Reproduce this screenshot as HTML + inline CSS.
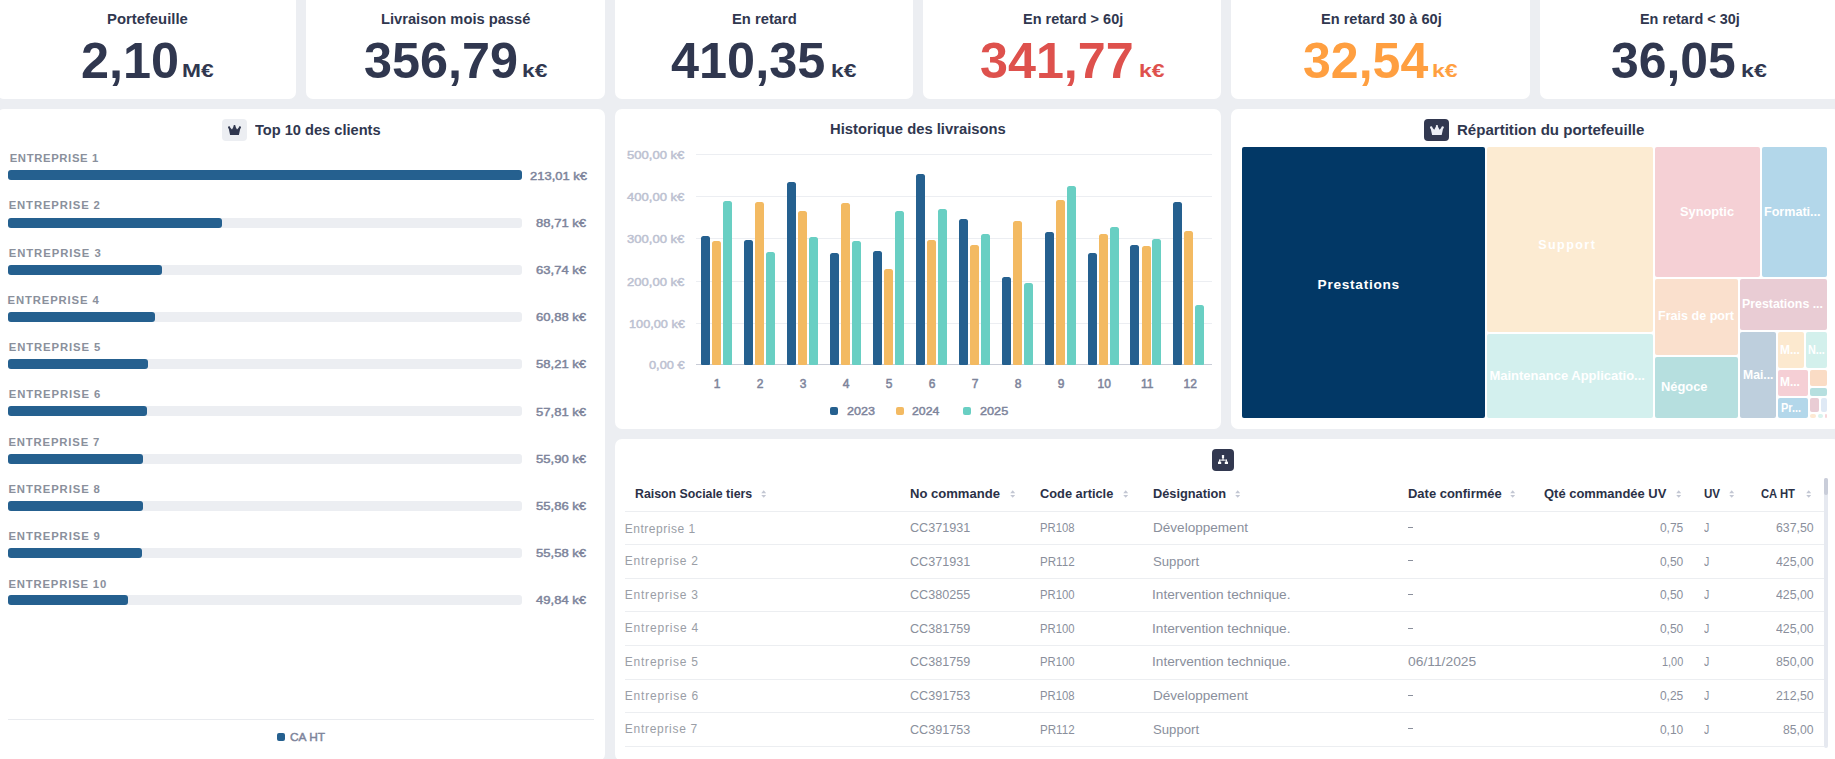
<!DOCTYPE html>
<html lang="fr"><head><meta charset="utf-8"><title>Dashboard</title>
<style>
html,body{margin:0;padding:0;}
html{overflow:hidden;width:1835px;height:759px;}
body{width:1835px;height:759px;overflow:hidden;background:#eceef2;position:relative;font-family:"Liberation Sans", sans-serif;}
#r{position:absolute;left:0;top:0;width:1835px;height:759px;overflow:hidden;}
#r>div,#r>svg{position:absolute;box-sizing:border-box;}
.t{position:absolute;white-space:nowrap;line-height:1;transform-origin:0 50%;display:block;}
</style></head><body><div id="r">
<div style="left:-3px;top:-6px;width:299px;height:105px;background:#ffffff;border-radius:7px;"></div>
<div style="left:306px;top:-6px;width:299px;height:105px;background:#ffffff;border-radius:7px;"></div>
<div style="left:615px;top:-6px;width:298px;height:105px;background:#ffffff;border-radius:7px;"></div>
<div style="left:923px;top:-6px;width:298px;height:105px;background:#ffffff;border-radius:7px;"></div>
<div style="left:1231px;top:-6px;width:299px;height:105px;background:#ffffff;border-radius:7px;"></div>
<div style="left:1540px;top:-6px;width:300px;height:105px;background:#ffffff;border-radius:7px;"></div>
<div style="left:-3px;top:109px;width:608px;height:652px;background:#ffffff;border-radius:7px;"></div>
<div style="left:615px;top:109px;width:606px;height:320px;background:#ffffff;border-radius:7px;"></div>
<div style="left:1231px;top:109px;width:609px;height:320px;background:#ffffff;border-radius:7px;"></div>
<div style="left:615px;top:439px;width:1225px;height:322px;background:#ffffff;border-radius:7px;"></div>
<span class="t" style="left:106.80px;top:11.85px;font-size:14px;color:#30374f;font-weight:700;transform:scaleX(1.0594);">Portefeuille</span>
<span class="t" style="left:80.68px;top:35.77px;font-size:49.3px;color:#30374f;font-weight:700;transform:scaleX(1.0221);">2,10</span>
<span class="t" style="left:181.90px;top:62.69px;font-size:17.5px;color:#30374f;font-weight:700;transform:scaleX(1.3021);">M€</span>
<span class="t" style="left:380.60px;top:11.85px;font-size:14px;color:#30374f;font-weight:700;transform:scaleX(1.0490);">Livraison mois passé</span>
<span class="t" style="left:363.78px;top:35.77px;font-size:49.3px;color:#30374f;font-weight:700;transform:scaleX(1.0211);">356,79</span>
<span class="t" style="left:522.30px;top:62.69px;font-size:17.5px;color:#30374f;font-weight:700;transform:scaleX(1.3025);">k€</span>
<span class="t" style="left:731.80px;top:11.85px;font-size:14px;color:#30374f;font-weight:700;transform:scaleX(1.0540);">En retard</span>
<span class="t" style="left:670.90px;top:35.77px;font-size:49.3px;color:#30374f;font-weight:700;transform:scaleX(1.0229);">410,35</span>
<span class="t" style="left:830.60px;top:62.69px;font-size:17.5px;color:#30374f;font-weight:700;transform:scaleX(1.3025);">k€</span>
<span class="t" style="left:1022.70px;top:11.85px;font-size:14px;color:#30374f;font-weight:700;transform:scaleX(1.0345);">En retard &gt; 60j</span>
<span class="t" style="left:980.08px;top:35.77px;font-size:49.3px;color:#de514d;font-weight:700;transform:scaleX(1.0191);">341,77</span>
<span class="t" style="left:1138.69px;top:62.69px;font-size:17.5px;color:#de514d;font-weight:700;transform:scaleX(1.3132);">k€</span>
<span class="t" style="left:1320.50px;top:11.85px;font-size:14px;color:#30374f;font-weight:700;transform:scaleX(1.0412);">En retard 30 à 60j</span>
<span class="t" style="left:1302.68px;top:35.77px;font-size:49.3px;color:#ff9f40;font-weight:700;transform:scaleX(1.0151);">32,54</span>
<span class="t" style="left:1432.48px;top:62.69px;font-size:17.5px;color:#ff9f40;font-weight:700;transform:scaleX(1.3186);">k€</span>
<span class="t" style="left:1639.70px;top:11.85px;font-size:14px;color:#30374f;font-weight:700;transform:scaleX(1.0293);">En retard &lt; 30j</span>
<span class="t" style="left:1610.99px;top:35.77px;font-size:49.3px;color:#30374f;font-weight:700;transform:scaleX(1.0103);">36,05</span>
<span class="t" style="left:1741.08px;top:62.69px;font-size:17.5px;color:#30374f;font-weight:700;transform:scaleX(1.3239);">k€</span>
<div style="left:222px;top:119px;width:25px;height:22px;background:#eceef2;border-radius:4px;"></div>
<svg style="left:228px;top:124.8px" width="13" height="10.2" viewBox="0 0 26 20"><path fill="#30374f" d="M1 5 L3.2 3.6 L8 9 L12 1.5 L13 0.5 L14 1.5 L18 9 L22.8 3.6 L25 5 L21.8 20 L4.2 20 Z"/><circle cx="13" cy="2" r="2" fill="#30374f"/><circle cx="2.2" cy="4.6" r="2.2" fill="#30374f"/><circle cx="23.8" cy="4.6" r="2.2" fill="#30374f"/></svg>
<span class="t" style="left:254.50px;top:123.00px;font-size:14px;color:#30374f;font-weight:700;transform:scaleX(1.0436);">Top 10 des clients</span>
<div style="left:8px;top:170px;width:514px;height:10px;background:#eceef2;border-radius:3px;"></div>
<div style="left:8px;top:170px;width:514px;height:10px;background:#25608f;border-radius:3px;"></div>
<span class="t" style="left:529.50px;top:170.18px;font-size:11.6px;color:#7d849b;transform:scaleX(1.1189);-webkit-text-stroke:0.45px #7d849b;">213,01 k€</span>
<span class="t" style="left:9.70px;top:152.83px;font-size:11.3px;color:#8a909c;font-weight:700;letter-spacing:0.634px;">ENTREPRISE 1</span>
<div style="left:8px;top:218px;width:514px;height:10px;background:#eceef2;border-radius:3px;"></div>
<div style="left:8px;top:218px;width:214.06px;height:10px;background:#25608f;border-radius:3px;"></div>
<span class="t" style="left:536.40px;top:217.18px;font-size:11.6px;color:#7d849b;transform:scaleX(1.1259);-webkit-text-stroke:0.45px #7d849b;">88,71 k€</span>
<span class="t" style="left:8.70px;top:199.83px;font-size:11.3px;color:#8a909c;font-weight:700;letter-spacing:0.87px;">ENTREPRISE 2</span>
<div style="left:8px;top:265px;width:514px;height:10px;background:#eceef2;border-radius:3px;"></div>
<div style="left:8px;top:265px;width:153.807px;height:10px;background:#25608f;border-radius:3px;"></div>
<span class="t" style="left:536.40px;top:264.18px;font-size:11.6px;color:#7d849b;transform:scaleX(1.1259);-webkit-text-stroke:0.45px #7d849b;">63,74 k€</span>
<span class="t" style="left:8.70px;top:247.83px;font-size:11.3px;color:#8a909c;font-weight:700;letter-spacing:0.943px;">ENTREPRISE 3</span>
<div style="left:8px;top:312px;width:514px;height:10px;background:#eceef2;border-radius:3px;"></div>
<div style="left:8px;top:312px;width:146.905px;height:10px;background:#25608f;border-radius:3px;"></div>
<span class="t" style="left:536.40px;top:310.88px;font-size:11.6px;color:#7d849b;transform:scaleX(1.1259);-webkit-text-stroke:0.45px #7d849b;">60,88 k€</span>
<span class="t" style="left:7.50px;top:295.03px;font-size:11.3px;color:#8a909c;font-weight:700;letter-spacing:0.87px;">ENTREPRISE 4</span>
<div style="left:8px;top:359px;width:514px;height:10px;background:#eceef2;border-radius:3px;"></div>
<div style="left:8px;top:359px;width:140.463px;height:10px;background:#25608f;border-radius:3px;"></div>
<span class="t" style="left:536.40px;top:357.88px;font-size:11.6px;color:#7d849b;transform:scaleX(1.1259);-webkit-text-stroke:0.45px #7d849b;">58,21 k€</span>
<span class="t" style="left:8.70px;top:342.13px;font-size:11.3px;color:#8a909c;font-weight:700;letter-spacing:0.907px;">ENTREPRISE 5</span>
<div style="left:8px;top:406px;width:514px;height:10px;background:#eceef2;border-radius:3px;"></div>
<div style="left:8px;top:406px;width:139.497px;height:10px;background:#25608f;border-radius:3px;"></div>
<span class="t" style="left:536.40px;top:406.18px;font-size:11.6px;color:#7d849b;transform:scaleX(1.1259);-webkit-text-stroke:0.45px #7d849b;">57,81 k€</span>
<span class="t" style="left:8.70px;top:388.63px;font-size:11.3px;color:#8a909c;font-weight:700;letter-spacing:0.907px;">ENTREPRISE 6</span>
<div style="left:8px;top:454px;width:514px;height:10px;background:#eceef2;border-radius:3px;"></div>
<div style="left:8px;top:454px;width:134.889px;height:10px;background:#25608f;border-radius:3px;"></div>
<span class="t" style="left:536.40px;top:452.68px;font-size:11.6px;color:#7d849b;transform:scaleX(1.1259);-webkit-text-stroke:0.45px #7d849b;">55,90 k€</span>
<span class="t" style="left:8.40px;top:436.63px;font-size:11.3px;color:#8a909c;font-weight:700;letter-spacing:0.843px;">ENTREPRISE 7</span>
<div style="left:8px;top:501px;width:514px;height:10px;background:#eceef2;border-radius:3px;"></div>
<div style="left:8px;top:501px;width:134.792px;height:10px;background:#25608f;border-radius:3px;"></div>
<span class="t" style="left:536.40px;top:499.68px;font-size:11.6px;color:#7d849b;transform:scaleX(1.1259);-webkit-text-stroke:0.45px #7d849b;">55,86 k€</span>
<span class="t" style="left:8.40px;top:483.73px;font-size:11.3px;color:#8a909c;font-weight:700;letter-spacing:0.898px;">ENTREPRISE 8</span>
<div style="left:8px;top:548px;width:514px;height:10px;background:#eceef2;border-radius:3px;"></div>
<div style="left:8px;top:548px;width:134.116px;height:10px;background:#25608f;border-radius:3px;"></div>
<span class="t" style="left:536.40px;top:547.18px;font-size:11.6px;color:#7d849b;transform:scaleX(1.1259);-webkit-text-stroke:0.45px #7d849b;">55,58 k€</span>
<span class="t" style="left:8.40px;top:531.33px;font-size:11.3px;color:#8a909c;font-weight:700;letter-spacing:0.898px;">ENTREPRISE 9</span>
<div style="left:8px;top:595px;width:514px;height:10px;background:#eceef2;border-radius:3px;"></div>
<div style="left:8px;top:595px;width:120.266px;height:10px;background:#25608f;border-radius:3px;"></div>
<span class="t" style="left:536.40px;top:593.68px;font-size:11.6px;color:#7d849b;transform:scaleX(1.1259);-webkit-text-stroke:0.45px #7d849b;">49,84 k€</span>
<span class="t" style="left:8.40px;top:578.83px;font-size:11.3px;color:#8a909c;font-weight:700;letter-spacing:0.832px;">ENTREPRISE 10</span>
<div style="left:8px;top:719px;width:586px;height:1px;background:#e9ebef;"></div>
<div style="left:277px;top:733px;width:8px;height:8px;background:#25608f;border-radius:2px;"></div>
<span class="t" style="left:290.40px;top:730.98px;font-size:11.6px;color:#7d849b;transform:scaleX(1.0260);-webkit-text-stroke:0.45px #7d849b;">CA HT</span>
<span class="t" style="left:830.00px;top:121.95px;font-size:14px;color:#30374f;font-weight:700;transform:scaleX(1.0557);">Historique des livraisons</span>
<div style="left:696px;top:154px;width:516px;height:1px;background:#eceef2;"></div>
<span class="t" style="left:627.20px;top:148.98px;font-size:11.6px;color:#bcc1d1;transform:scaleX(1.1267);-webkit-text-stroke:0.45px #bcc1d1;">500,00 k€</span>
<div style="left:696px;top:196px;width:516px;height:1px;background:#eceef2;"></div>
<span class="t" style="left:627.20px;top:190.98px;font-size:11.6px;color:#bcc1d1;transform:scaleX(1.1267);-webkit-text-stroke:0.45px #bcc1d1;">400,00 k€</span>
<div style="left:696px;top:238px;width:516px;height:1px;background:#eceef2;"></div>
<span class="t" style="left:627.20px;top:232.98px;font-size:11.6px;color:#bcc1d1;transform:scaleX(1.1267);-webkit-text-stroke:0.45px #bcc1d1;">300,00 k€</span>
<div style="left:696px;top:281px;width:516px;height:1px;background:#eceef2;"></div>
<span class="t" style="left:627.20px;top:275.98px;font-size:11.6px;color:#bcc1d1;transform:scaleX(1.1267);-webkit-text-stroke:0.45px #bcc1d1;">200,00 k€</span>
<div style="left:696px;top:323px;width:516px;height:1px;background:#eceef2;"></div>
<span class="t" style="left:628.70px;top:317.98px;font-size:11.6px;color:#bcc1d1;transform:scaleX(1.0975);-webkit-text-stroke:0.45px #bcc1d1;">100,00 k€</span>
<div style="left:696px;top:364px;width:516px;height:1px;background:#c8ccd6;"></div>
<span class="t" style="left:649.00px;top:359.48px;font-size:11.6px;color:#bcc1d1;transform:scaleX(1.1041);-webkit-text-stroke:0.45px #bcc1d1;">0,00 €</span>
<div style="left:701px;top:236px;width:9px;height:129px;background:#25608f;border-radius:2.5px 2.5px 1px 1px;"></div>
<div style="left:712px;top:241px;width:9px;height:124px;background:#f3ba62;border-radius:2.5px 2.5px 1px 1px;"></div>
<div style="left:723px;top:201px;width:9px;height:164px;background:#69cfc3;border-radius:2.5px 2.5px 1px 1px;"></div>
<span class="t" style="left:713.80px;top:377.84px;font-size:12px;color:#7d849b;-webkit-text-stroke:0.5px #7d849b;">1</span>
<div style="left:744px;top:240px;width:9px;height:125px;background:#25608f;border-radius:2.5px 2.5px 1px 1px;"></div>
<div style="left:755px;top:202px;width:9px;height:163px;background:#f3ba62;border-radius:2.5px 2.5px 1px 1px;"></div>
<div style="left:766px;top:252px;width:9px;height:113px;background:#69cfc3;border-radius:2.5px 2.5px 1px 1px;"></div>
<span class="t" style="left:756.80px;top:377.84px;font-size:12px;color:#7d849b;-webkit-text-stroke:0.5px #7d849b;">2</span>
<div style="left:787px;top:182px;width:9px;height:183px;background:#25608f;border-radius:2.5px 2.5px 1px 1px;"></div>
<div style="left:798px;top:211px;width:9px;height:154px;background:#f3ba62;border-radius:2.5px 2.5px 1px 1px;"></div>
<div style="left:809px;top:237px;width:9px;height:128px;background:#69cfc3;border-radius:2.5px 2.5px 1px 1px;"></div>
<span class="t" style="left:799.80px;top:377.84px;font-size:12px;color:#7d849b;-webkit-text-stroke:0.5px #7d849b;">3</span>
<div style="left:830px;top:253px;width:9px;height:112px;background:#25608f;border-radius:2.5px 2.5px 1px 1px;"></div>
<div style="left:841px;top:203px;width:9px;height:162px;background:#f3ba62;border-radius:2.5px 2.5px 1px 1px;"></div>
<div style="left:852px;top:241px;width:9px;height:124px;background:#69cfc3;border-radius:2.5px 2.5px 1px 1px;"></div>
<span class="t" style="left:842.80px;top:377.84px;font-size:12px;color:#7d849b;-webkit-text-stroke:0.5px #7d849b;">4</span>
<div style="left:873px;top:251px;width:9px;height:114px;background:#25608f;border-radius:2.5px 2.5px 1px 1px;"></div>
<div style="left:884px;top:269px;width:9px;height:96px;background:#f3ba62;border-radius:2.5px 2.5px 1px 1px;"></div>
<div style="left:895px;top:211px;width:9px;height:154px;background:#69cfc3;border-radius:2.5px 2.5px 1px 1px;"></div>
<span class="t" style="left:885.80px;top:377.84px;font-size:12px;color:#7d849b;-webkit-text-stroke:0.5px #7d849b;">5</span>
<div style="left:916px;top:174px;width:9px;height:191px;background:#25608f;border-radius:2.5px 2.5px 1px 1px;"></div>
<div style="left:927px;top:240px;width:9px;height:125px;background:#f3ba62;border-radius:2.5px 2.5px 1px 1px;"></div>
<div style="left:938px;top:209px;width:9px;height:156px;background:#69cfc3;border-radius:2.5px 2.5px 1px 1px;"></div>
<span class="t" style="left:928.80px;top:377.84px;font-size:12px;color:#7d849b;-webkit-text-stroke:0.5px #7d849b;">6</span>
<div style="left:959px;top:219px;width:9px;height:146px;background:#25608f;border-radius:2.5px 2.5px 1px 1px;"></div>
<div style="left:970px;top:245px;width:9px;height:120px;background:#f3ba62;border-radius:2.5px 2.5px 1px 1px;"></div>
<div style="left:981px;top:234px;width:9px;height:131px;background:#69cfc3;border-radius:2.5px 2.5px 1px 1px;"></div>
<span class="t" style="left:971.80px;top:377.84px;font-size:12px;color:#7d849b;-webkit-text-stroke:0.5px #7d849b;">7</span>
<div style="left:1002px;top:277px;width:9px;height:88px;background:#25608f;border-radius:2.5px 2.5px 1px 1px;"></div>
<div style="left:1013px;top:221px;width:9px;height:144px;background:#f3ba62;border-radius:2.5px 2.5px 1px 1px;"></div>
<div style="left:1024px;top:283px;width:9px;height:82px;background:#69cfc3;border-radius:2.5px 2.5px 1px 1px;"></div>
<span class="t" style="left:1014.80px;top:377.84px;font-size:12px;color:#7d849b;-webkit-text-stroke:0.5px #7d849b;">8</span>
<div style="left:1045px;top:232px;width:9px;height:133px;background:#25608f;border-radius:2.5px 2.5px 1px 1px;"></div>
<div style="left:1056px;top:200px;width:9px;height:165px;background:#f3ba62;border-radius:2.5px 2.5px 1px 1px;"></div>
<div style="left:1067px;top:186px;width:9px;height:179px;background:#69cfc3;border-radius:2.5px 2.5px 1px 1px;"></div>
<span class="t" style="left:1057.80px;top:377.84px;font-size:12px;color:#7d849b;-webkit-text-stroke:0.5px #7d849b;">9</span>
<div style="left:1088px;top:253px;width:9px;height:112px;background:#25608f;border-radius:2.5px 2.5px 1px 1px;"></div>
<div style="left:1099px;top:234px;width:9px;height:131px;background:#f3ba62;border-radius:2.5px 2.5px 1px 1px;"></div>
<div style="left:1110px;top:227px;width:9px;height:138px;background:#69cfc3;border-radius:2.5px 2.5px 1px 1px;"></div>
<span class="t" style="left:1097.46px;top:377.84px;font-size:12px;color:#7d849b;-webkit-text-stroke:0.5px #7d849b;">10</span>
<div style="left:1130px;top:245px;width:9px;height:120px;background:#25608f;border-radius:2.5px 2.5px 1px 1px;"></div>
<div style="left:1142px;top:246px;width:9px;height:119px;background:#f3ba62;border-radius:2.5px 2.5px 1px 1px;"></div>
<div style="left:1152px;top:239px;width:9px;height:126px;background:#69cfc3;border-radius:2.5px 2.5px 1px 1px;"></div>
<span class="t" style="left:1140.91px;top:377.84px;font-size:12px;color:#7d849b;-webkit-text-stroke:0.5px #7d849b;">11</span>
<div style="left:1173px;top:202px;width:9px;height:163px;background:#25608f;border-radius:2.5px 2.5px 1px 1px;"></div>
<div style="left:1184px;top:231px;width:9px;height:134px;background:#f3ba62;border-radius:2.5px 2.5px 1px 1px;"></div>
<div style="left:1195px;top:305px;width:9px;height:60px;background:#69cfc3;border-radius:2.5px 2.5px 1px 1px;"></div>
<span class="t" style="left:1183.46px;top:377.84px;font-size:12px;color:#7d849b;-webkit-text-stroke:0.5px #7d849b;">12</span>
<div style="left:830px;top:407px;width:8px;height:8px;background:#25608f;border-radius:2px;"></div>
<span class="t" style="left:846.70px;top:404.88px;font-size:11.6px;color:#7d849b;transform:scaleX(1.0851);-webkit-text-stroke:0.45px #7d849b;">2023</span>
<div style="left:896px;top:407px;width:8px;height:8px;background:#f3ba62;border-radius:2px;"></div>
<span class="t" style="left:912.40px;top:404.88px;font-size:11.6px;color:#7d849b;transform:scaleX(1.0629);-webkit-text-stroke:0.45px #7d849b;">2024</span>
<div style="left:963px;top:407px;width:8px;height:8px;background:#69cfc3;border-radius:2px;"></div>
<span class="t" style="left:979.50px;top:404.88px;font-size:11.6px;color:#7d849b;transform:scaleX(1.0930);-webkit-text-stroke:0.45px #7d849b;">2025</span>
<div style="left:1424px;top:119px;width:25px;height:22px;background:#323850;border-radius:4px;"></div>
<svg style="left:1430px;top:124.6px" width="13.8" height="10.6" viewBox="0 0 26 20"><path fill="#eceef5" d="M1 5 L3.2 3.6 L8 9 L12 1.5 L13 0.5 L14 1.5 L18 9 L22.8 3.6 L25 5 L21.8 20 L4.2 20 Z"/><circle cx="13" cy="2" r="2" fill="#eceef5"/><circle cx="2.2" cy="4.6" r="2.2" fill="#eceef5"/><circle cx="23.8" cy="4.6" r="2.2" fill="#eceef5"/></svg>
<span class="t" style="left:1456.90px;top:123.05px;font-size:14px;color:#30374f;font-weight:700;transform:scaleX(1.0754);">Répartition du portefeuille</span>
<div style="left:1242px;top:147px;width:243px;height:271px;background:#023866;border-radius:2px;"></div>
<div style="left:1487px;top:147px;width:166px;height:185px;background:#fcebd2;border-radius:2px;"></div>
<div style="left:1487px;top:334px;width:166px;height:84px;background:#d3f0ee;border-radius:2px;"></div>
<div style="left:1655px;top:147px;width:105px;height:130px;background:#f5d0d5;border-radius:2px;"></div>
<div style="left:1762px;top:147px;width:65px;height:130px;background:#b3d7ea;border-radius:2px;"></div>
<div style="left:1655px;top:279px;width:83px;height:75.5px;background:#fae0cd;border-radius:2px;"></div>
<div style="left:1655px;top:356.5px;width:83px;height:61.5px;background:#b6dfdf;border-radius:2px;"></div>
<div style="left:1740px;top:279px;width:87px;height:51px;background:#e9ccd4;border-radius:2px;"></div>
<div style="left:1740px;top:332px;width:36px;height:86px;background:#becfdd;border-radius:2px;"></div>
<div style="left:1778px;top:332px;width:26px;height:36px;background:#fce9cf;border-radius:2px;"></div>
<div style="left:1806px;top:332px;width:21px;height:36px;background:#d3f0ec;border-radius:2px;"></div>
<div style="left:1778px;top:370px;width:30px;height:26px;background:#f5cfd5;border-radius:2px;"></div>
<div style="left:1778px;top:398px;width:30px;height:20px;background:#b3d7ea;border-radius:2px;"></div>
<div style="left:1810px;top:370px;width:17px;height:16px;background:#fadcc5;border-radius:2px;"></div>
<div style="left:1810px;top:388px;width:17px;height:8px;background:#b6dfdf;border-radius:2px;"></div>
<div style="left:1810px;top:398px;width:8.5px;height:14px;background:#e9ccd4;border-radius:2px;"></div>
<div style="left:1820.5px;top:398px;width:6.5px;height:14px;background:#dfe9f5;border-radius:2px;"></div>
<div style="left:1810px;top:414px;width:6px;height:4px;background:#fde9d3;border-radius:2px;"></div>
<div style="left:1818px;top:414px;width:5px;height:4px;background:#d9f3ee;border-radius:2px;"></div>
<div style="left:1825px;top:414px;width:2px;height:4px;background:#f7d6da;border-radius:2px;"></div>
<span class="t" style="left:1317.60px;top:277.50px;font-size:13.7px;color:#ffffff;font-weight:700;letter-spacing:0.697px;">Prestations</span>
<span class="t" style="left:1538.20px;top:239.42px;font-size:12.5px;color:#ffffff;font-weight:700;letter-spacing:1.459px;">Support</span>
<span class="t" style="left:1489.40px;top:369.40px;font-size:13px;color:#ffffff;font-weight:700;">Maintenance Applicatio...</span>
<span class="t" style="left:1680.20px;top:205.30px;font-size:13px;color:#ffffff;font-weight:700;transform:scaleX(0.9842);">Synoptic</span>
<span class="t" style="left:1764.00px;top:205.30px;font-size:13px;color:#ffffff;font-weight:700;transform:scaleX(0.9673);">Formati...</span>
<span class="t" style="left:1658.00px;top:309.30px;font-size:13px;color:#ffffff;font-weight:700;transform:scaleX(0.9659);">Frais de port</span>
<span class="t" style="left:1741.80px;top:297.00px;font-size:13px;color:#ffffff;font-weight:700;transform:scaleX(0.9499);">Prestations ...</span>
<span class="t" style="left:1660.70px;top:380.30px;font-size:13px;color:#ffffff;font-weight:700;transform:scaleX(0.9887);">Négoce</span>
<span class="t" style="left:1742.60px;top:367.90px;font-size:13px;color:#ffffff;font-weight:700;transform:scaleX(0.9375);">Mai...</span>
<span class="t" style="left:1780.10px;top:343.59px;font-size:12.3px;color:#ffffff;font-weight:700;transform:scaleX(0.9713);">M...</span>
<span class="t" style="left:1808.10px;top:343.59px;font-size:12.3px;color:#ffffff;font-weight:700;transform:scaleX(0.8817);">N...</span>
<span class="t" style="left:1780.10px;top:376.49px;font-size:12.3px;color:#ffffff;font-weight:700;transform:scaleX(0.9713);">M...</span>
<span class="t" style="left:1780.50px;top:401.79px;font-size:12.3px;color:#ffffff;font-weight:700;transform:scaleX(0.8897);">Pr...</span>
<div style="left:1212px;top:449px;width:22px;height:22px;background:#323850;border-radius:4px;"></div>
<svg style="left:1218px;top:454.5px" width="10" height="9.5" viewBox="0 0 20 19"><g fill="#ffffff"><rect x="7.8" y="0" width="4.4" height="6.5" rx="1"/><rect x="0" y="13" width="6.4" height="6" rx="1.2"/><rect x="13.6" y="13" width="6.4" height="6" rx="1.2"/><rect x="9" y="6" width="2" height="5"/><rect x="2.2" y="9.2" width="15.6" height="2"/><rect x="2.2" y="9.2" width="2" height="4.5"/><rect x="15.8" y="9.2" width="2" height="4.5"/></g></svg>
<span class="t" style="left:635.10px;top:487.64px;font-size:12px;color:#2b3147;font-weight:700;transform:scaleX(1.0273);">Raison Sociale tiers</span>
<svg style="left:761.4px;top:489.8px" width="5.4" height="8.1" viewBox="0 0 12 18"><path fill="#c3c7d3" d="M6 0.5 L11.5 7 H0.5 Z M6 17.5 L0.5 11 H11.5 Z"/></svg>
<span class="t" style="left:910.30px;top:487.64px;font-size:12px;color:#2b3147;font-weight:700;transform:scaleX(1.0878);">No commande</span>
<svg style="left:1010.0px;top:489.8px" width="5.4" height="8.1" viewBox="0 0 12 18"><path fill="#c3c7d3" d="M6 0.5 L11.5 7 H0.5 Z M6 17.5 L0.5 11 H11.5 Z"/></svg>
<span class="t" style="left:1040.20px;top:487.64px;font-size:12px;color:#2b3147;font-weight:700;transform:scaleX(1.0664);">Code article</span>
<svg style="left:1122.8px;top:489.8px" width="5.4" height="8.1" viewBox="0 0 12 18"><path fill="#c3c7d3" d="M6 0.5 L11.5 7 H0.5 Z M6 17.5 L0.5 11 H11.5 Z"/></svg>
<span class="t" style="left:1153.40px;top:487.64px;font-size:12px;color:#2b3147;font-weight:700;transform:scaleX(1.0652);">Désignation</span>
<svg style="left:1234.8px;top:489.8px" width="5.4" height="8.1" viewBox="0 0 12 18"><path fill="#c3c7d3" d="M6 0.5 L11.5 7 H0.5 Z M6 17.5 L0.5 11 H11.5 Z"/></svg>
<span class="t" style="left:1407.70px;top:487.64px;font-size:12px;color:#2b3147;font-weight:700;transform:scaleX(1.0802);">Date confirmée</span>
<svg style="left:1510.3999999999999px;top:489.8px" width="5.4" height="8.1" viewBox="0 0 12 18"><path fill="#c3c7d3" d="M6 0.5 L11.5 7 H0.5 Z M6 17.5 L0.5 11 H11.5 Z"/></svg>
<span class="t" style="left:1543.70px;top:487.64px;font-size:12px;color:#2b3147;font-weight:700;transform:scaleX(1.0788);">Qté commandée UV</span>
<svg style="left:1675.6px;top:489.8px" width="5.4" height="8.1" viewBox="0 0 12 18"><path fill="#c3c7d3" d="M6 0.5 L11.5 7 H0.5 Z M6 17.5 L0.5 11 H11.5 Z"/></svg>
<span class="t" style="left:1703.90px;top:487.64px;font-size:12px;color:#2b3147;font-weight:700;transform:scaleX(0.9660);">UV</span>
<svg style="left:1729.3px;top:489.8px" width="5.4" height="8.1" viewBox="0 0 12 18"><path fill="#c3c7d3" d="M6 0.5 L11.5 7 H0.5 Z M6 17.5 L0.5 11 H11.5 Z"/></svg>
<span class="t" style="left:1761.20px;top:487.64px;font-size:12px;color:#2b3147;font-weight:700;transform:scaleX(0.9375);">CA HT</span>
<svg style="left:1805.6px;top:489.8px" width="5.4" height="8.1" viewBox="0 0 12 18"><path fill="#c3c7d3" d="M6 0.5 L11.5 7 H0.5 Z M6 17.5 L0.5 11 H11.5 Z"/></svg>
<div style="left:625px;top:511px;width:1199px;height:1px;background:#eceef1;"></div>
<div style="left:625px;top:544px;width:1199px;height:1px;background:#eceef1;"></div>
<div style="left:625px;top:578px;width:1199px;height:1px;background:#eceef1;"></div>
<div style="left:625px;top:611px;width:1199px;height:1px;background:#eceef1;"></div>
<div style="left:625px;top:645px;width:1199px;height:1px;background:#eceef1;"></div>
<div style="left:625px;top:679px;width:1199px;height:1px;background:#eceef1;"></div>
<div style="left:625px;top:712px;width:1199px;height:1px;background:#eceef1;"></div>
<div style="left:625px;top:746px;width:1199px;height:1px;background:#eceef1;"></div>
<span class="t" style="left:624.80px;top:522.84px;font-size:12px;color:#9a9ea6;letter-spacing:0.516px;">Entreprise 1</span>
<span class="t" style="left:910.30px;top:521.94px;font-size:12px;color:#8a8f9c;transform:scaleX(1.0485);">CC371931</span>
<span class="t" style="left:1040.20px;top:521.94px;font-size:12px;color:#8a8f9c;transform:scaleX(0.9428);">PR108</span>
<span class="t" style="left:1153.30px;top:521.94px;font-size:12px;color:#8a8f9c;transform:scaleX(1.1296);">Développement</span>
<div style="left:1408.3px;top:526.7px;width:5.2px;height:1px;background:#8a8f9c;"></div>
<span class="t" style="left:1659.90px;top:521.94px;font-size:12px;color:#8a8f9c;">0,75</span>
<span class="t" style="left:1704.00px;top:521.94px;font-size:12px;color:#8a8f9c;transform:scaleX(0.8833);">J</span>
<span class="t" style="left:1776.00px;top:521.94px;font-size:12px;color:#8a8f9c;transform:scaleX(1.0262);">637,50</span>
<span class="t" style="left:624.80px;top:555.14px;font-size:12px;color:#9a9ea6;letter-spacing:0.77px;">Entreprise 2</span>
<span class="t" style="left:910.30px;top:555.54px;font-size:12px;color:#8a8f9c;transform:scaleX(1.0485);">CC371931</span>
<span class="t" style="left:1040.20px;top:555.54px;font-size:12px;color:#8a8f9c;transform:scaleX(0.9660);">PR112</span>
<span class="t" style="left:1153.30px;top:555.54px;font-size:12px;color:#8a8f9c;transform:scaleX(1.0961);">Support</span>
<div style="left:1408.3px;top:560.3px;width:5.2px;height:1px;background:#8a8f9c;"></div>
<span class="t" style="left:1659.90px;top:555.54px;font-size:12px;color:#8a8f9c;">0,50</span>
<span class="t" style="left:1704.00px;top:555.54px;font-size:12px;color:#8a8f9c;transform:scaleX(0.8833);">J</span>
<span class="t" style="left:1776.00px;top:555.54px;font-size:12px;color:#8a8f9c;transform:scaleX(1.0262);">425,00</span>
<span class="t" style="left:624.80px;top:588.74px;font-size:12px;color:#9a9ea6;letter-spacing:0.77px;">Entreprise 3</span>
<span class="t" style="left:910.30px;top:589.14px;font-size:12px;color:#8a8f9c;transform:scaleX(1.0485);">CC380255</span>
<span class="t" style="left:1040.20px;top:589.14px;font-size:12px;color:#8a8f9c;transform:scaleX(0.9428);">PR100</span>
<span class="t" style="left:1152.16px;top:589.14px;font-size:12px;color:#8a8f9c;transform:scaleX(1.1409);">Intervention technique.</span>
<div style="left:1408.3px;top:593.9px;width:5.2px;height:1px;background:#8a8f9c;"></div>
<span class="t" style="left:1659.90px;top:589.14px;font-size:12px;color:#8a8f9c;">0,50</span>
<span class="t" style="left:1704.00px;top:589.14px;font-size:12px;color:#8a8f9c;transform:scaleX(0.8833);">J</span>
<span class="t" style="left:1776.00px;top:589.14px;font-size:12px;color:#8a8f9c;transform:scaleX(1.0262);">425,00</span>
<span class="t" style="left:624.80px;top:622.04px;font-size:12px;color:#9a9ea6;letter-spacing:0.798px;">Entreprise 4</span>
<span class="t" style="left:910.30px;top:622.74px;font-size:12px;color:#8a8f9c;transform:scaleX(1.0485);">CC381759</span>
<span class="t" style="left:1040.20px;top:622.74px;font-size:12px;color:#8a8f9c;transform:scaleX(0.9428);">PR100</span>
<span class="t" style="left:1152.16px;top:622.74px;font-size:12px;color:#8a8f9c;transform:scaleX(1.1409);">Intervention technique.</span>
<div style="left:1408.3px;top:627.5px;width:5.2px;height:1px;background:#8a8f9c;"></div>
<span class="t" style="left:1659.90px;top:622.74px;font-size:12px;color:#8a8f9c;">0,50</span>
<span class="t" style="left:1704.00px;top:622.74px;font-size:12px;color:#8a8f9c;transform:scaleX(0.8833);">J</span>
<span class="t" style="left:1776.00px;top:622.74px;font-size:12px;color:#8a8f9c;transform:scaleX(1.0262);">425,00</span>
<span class="t" style="left:624.80px;top:656.44px;font-size:12px;color:#9a9ea6;letter-spacing:0.77px;">Entreprise 5</span>
<span class="t" style="left:910.30px;top:656.34px;font-size:12px;color:#8a8f9c;transform:scaleX(1.0485);">CC381759</span>
<span class="t" style="left:1040.20px;top:656.34px;font-size:12px;color:#8a8f9c;transform:scaleX(0.9428);">PR100</span>
<span class="t" style="left:1152.16px;top:656.34px;font-size:12px;color:#8a8f9c;transform:scaleX(1.1409);">Intervention technique.</span>
<span class="t" style="left:1407.80px;top:656.34px;font-size:12px;color:#8a8f9c;transform:scaleX(1.1531);">06/11/2025</span>
<span class="t" style="left:1662.00px;top:656.34px;font-size:12px;color:#8a8f9c;transform:scaleX(0.9079);">1,00</span>
<span class="t" style="left:1704.00px;top:656.34px;font-size:12px;color:#8a8f9c;transform:scaleX(0.8833);">J</span>
<span class="t" style="left:1776.00px;top:656.34px;font-size:12px;color:#8a8f9c;transform:scaleX(1.0262);">850,00</span>
<span class="t" style="left:624.80px;top:689.74px;font-size:12px;color:#9a9ea6;letter-spacing:0.798px;">Entreprise 6</span>
<span class="t" style="left:910.30px;top:689.94px;font-size:12px;color:#8a8f9c;transform:scaleX(1.0485);">CC391753</span>
<span class="t" style="left:1040.20px;top:689.94px;font-size:12px;color:#8a8f9c;transform:scaleX(0.9428);">PR108</span>
<span class="t" style="left:1153.30px;top:689.94px;font-size:12px;color:#8a8f9c;transform:scaleX(1.1296);">Développement</span>
<div style="left:1408.3px;top:694.7px;width:5.2px;height:1px;background:#8a8f9c;"></div>
<span class="t" style="left:1659.90px;top:689.94px;font-size:12px;color:#8a8f9c;">0,25</span>
<span class="t" style="left:1704.00px;top:689.94px;font-size:12px;color:#8a8f9c;transform:scaleX(0.8833);">J</span>
<span class="t" style="left:1776.00px;top:689.94px;font-size:12px;color:#8a8f9c;transform:scaleX(1.0262);">212,50</span>
<span class="t" style="left:624.80px;top:722.94px;font-size:12px;color:#9a9ea6;letter-spacing:0.707px;">Entreprise 7</span>
<span class="t" style="left:910.30px;top:723.54px;font-size:12px;color:#8a8f9c;transform:scaleX(1.0485);">CC391753</span>
<span class="t" style="left:1040.20px;top:723.54px;font-size:12px;color:#8a8f9c;transform:scaleX(0.9660);">PR112</span>
<span class="t" style="left:1153.30px;top:723.54px;font-size:12px;color:#8a8f9c;transform:scaleX(1.0961);">Support</span>
<div style="left:1408.3px;top:728.3px;width:5.2px;height:1px;background:#8a8f9c;"></div>
<span class="t" style="left:1659.90px;top:723.54px;font-size:12px;color:#8a8f9c;">0,10</span>
<span class="t" style="left:1704.00px;top:723.54px;font-size:12px;color:#8a8f9c;transform:scaleX(0.8833);">J</span>
<span class="t" style="left:1783.20px;top:723.54px;font-size:12px;color:#8a8f9c;transform:scaleX(1.0146);">85,00</span>
<div style="left:1824px;top:478px;width:4px;height:270px;background:#e6e9f0;border-radius:2px;"></div>
<div style="left:1824px;top:478px;width:4px;height:17px;background:#c9cdd9;border-radius:2px;"></div>
</div></body></html>
